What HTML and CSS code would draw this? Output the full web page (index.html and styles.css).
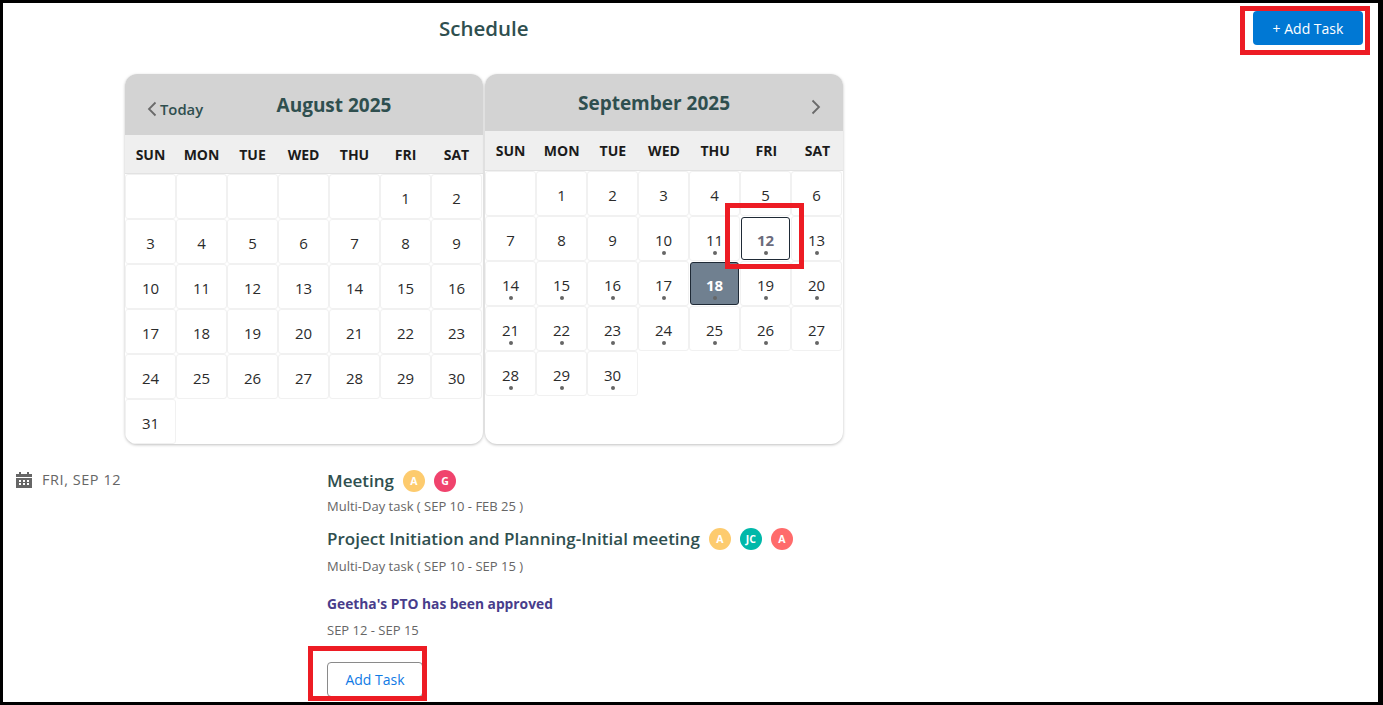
FILE: index.html
```html
<!DOCTYPE html>
<html lang="en">
<head>
    <meta charset="UTF-8">
    <meta name="viewport" content="width=device-width, initial-scale=1.0">
    <title>Schedule</title>
    <link rel="stylesheet" href="styles.css">
</head>
<body>
    <div class="page">
        <header class="top">
            <h1>Schedule</h1>
            <button class="btn-primary">+ Add Task</button>
        </header>

        <div class="calendars">
            <section class="month month-left">
                <div class="month-head">
                    <div class="today">
                        <svg class="chev" viewBox="0 0 10 16"><path d="M8.5 1.5 2 8l6.500 6.500"/></svg>
                        <span>Today</span>
                    </div>
                    <h2>August 2025</h2>
                </div>
                <div class="weekdays">
                    <span>SUN</span><span>MON</span><span>TUE</span><span>WED</span><span>THU</span><span>FRI</span><span>SAT</span>
                </div>
                <div class="days">
                    <div class="day"></div><div class="day"></div><div class="day"></div><div class="day"></div><div class="day"></div>
                    <div class="day">1</div><div class="day">2</div>
                    <div class="day">3</div><div class="day">4</div><div class="day">5</div><div class="day">6</div><div class="day">7</div><div class="day">8</div><div class="day">9</div>
                    <div class="day">10</div><div class="day">11</div><div class="day">12</div><div class="day">13</div><div class="day">14</div><div class="day">15</div><div class="day">16</div>
                    <div class="day">17</div><div class="day">18</div><div class="day">19</div><div class="day">20</div><div class="day">21</div><div class="day">22</div><div class="day">23</div>
                    <div class="day">24</div><div class="day">25</div><div class="day">26</div><div class="day">27</div><div class="day">28</div><div class="day">29</div><div class="day">30</div>
                    <div class="day">31</div>
                </div>
            </section>

            <section class="month month-right">
                <div class="month-head">
                    <h2>September 2025</h2>
                    <svg class="chev chev-next" viewBox="0 0 10 16"><path d="M1.500 1.500 8 8l-6.500 6.500"/></svg>
                </div>
                <div class="weekdays">
                    <span>SUN</span><span>MON</span><span>TUE</span><span>WED</span><span>THU</span><span>FRI</span><span>SAT</span>
                </div>
                <div class="days">
                    <div class="day"></div>
                    <div class="day">1</div><div class="day">2</div><div class="day">3</div><div class="day">4</div><div class="day">5</div><div class="day">6</div>
                    <div class="day">7</div><div class="day">8</div><div class="day">9</div>
                    <div class="day has-task">10</div><div class="day has-task">11</div><div class="day has-task selected">12</div><div class="day has-task">13</div>
                    <div class="day has-task">14</div><div class="day has-task">15</div><div class="day has-task">16</div><div class="day has-task">17</div><div class="day has-task current">18</div><div class="day has-task">19</div><div class="day has-task">20</div>
                    <div class="day has-task">21</div><div class="day has-task">22</div><div class="day has-task">23</div><div class="day has-task">24</div><div class="day has-task">25</div><div class="day has-task">26</div><div class="day has-task">27</div>
                    <div class="day has-task">28</div><div class="day has-task">29</div><div class="day has-task">30</div>
                </div>
            </section>
        </div>

        <div class="agenda">
            <div class="agenda-date">
                <svg class="cal-icon" viewBox="0 0 16 16"><path d="M3 0h2v2h6V0h2v2h3v3H0V2h3zM0 6h16v10H0zm3 2v2h2V8zm4 0v2h2V8zm4 0v2h2V8zm-8 3v2h2v-2zm4 0v2h2v-2zm4 0v2h2v-2z" fill-rule="evenodd"/></svg>
                <span>FRI, SEP 12</span>
            </div>
            <div class="agenda-list">
                <div class="task">
                    <div class="task-title">
                        <span>Meeting</span>
                        <i class="avatar yellow">A</i>
                        <i class="avatar pink">G</i>
                    </div>
                    <p class="task-sub">Multi-Day task ( SEP 10 - FEB 25 )</p>
                </div>
                <div class="task task-second">
                    <div class="task-title">
                        <span>Project Initiation and Planning-Initial meeting</span>
                        <i class="avatar yellow">A</i>
                        <i class="avatar teal">JC</i>
                        <i class="avatar coral">A</i>
                    </div>
                    <p class="task-sub">Multi-Day task ( SEP 10 - SEP 15 )</p>
                </div>
                <div class="pto">Geetha's PTO has been approved</div>
                <p class="task-sub pto-sub">SEP 12 - SEP 15</p>
                <button class="btn-outline">Add Task</button>
            </div>
        </div>
    </div>

    <!-- red review markers drawn over the screenshot -->
    <div class="marker marker-top"></div>
    <div class="marker marker-day"></div>
    <div class="marker marker-bottom"></div>
</body>
</html>
```

FILE: styles.css
```css
* {
    margin: 0;
    padding: 0;
    box-sizing: border-box;
}

html, body {
    height: 705px;
    overflow: hidden;
}

body {
    font-family: 'Open Sans', 'Noto Sans', sans-serif;
    background: #fff;
    color: #2f4f4f;
    border: solid #000;
    border-width: 3px 5px 3px 3px;
    position: relative;
}

.page {
    height: 100%;
    display: flex;
    flex-direction: column;
}

.top {
    height: 71px;
    display: flex;
    justify-content: space-between;
    align-items: flex-start;
    padding: 8px 15px 0 436px;
}

h1 {
    font-size: 20.500px;
    font-weight: 600;
    line-height: 34px;
    color: #2f4f4f;
}

.btn-primary {
    width: 110px;
    height: 34px;
    background: #0078d4;
    color: #fff;
    border: none;
    border-radius: 4px;
    font-family: inherit;
    font-size: 14px;
}

.calendars {
    display: flex;
    gap: 2px;
    margin-left: 122px;
    height: 370px;
}

.month {
    width: 358px;
    height: 370px;
    border-radius: 12px;
    overflow: hidden;
    background: #fff;
    box-shadow: 0 1px 3px rgba(0, 0, 0, 0.25);
}

.month-head {
    position: relative;
    background: #d3d3d3;
    display: flex;
    justify-content: center;
}

.month-left .month-head {
    height: 61px;
    padding: 17px 0 0 60px;
}

.month-right .month-head {
    height: 57px;
    padding: 15px 20px 0 0;
}

h2 {
    font-size: 19px;
    font-weight: 700;
    line-height: 28px;
    color: #2f4f4f;
}

.today {
    position: absolute;
    left: 22px;
    top: 24px;
    display: flex;
    align-items: center;
    gap: 3px;
    font-size: 14.800px;
    font-weight: 600;
    line-height: 22px;
}

.chev {
    width: 10px;
    height: 16px;
    fill: none;
    stroke: #6a6a6a;
    stroke-width: 1.800;
}

.chev-next {
    position: absolute;
    right: 22px;
    top: 25px;
}

.weekdays {
    height: 39px;
    display: grid;
    grid-template-columns: repeat(7, 51px);
    align-items: center;
    background: #efefef;
    border-bottom: 1px solid #e2e2e2;
    text-align: center;
    font-size: 14px;
    font-weight: 700;
    color: #1b1b1b;
}

.month-right .weekdays {
    height: 40px;
    grid-template-columns: repeat(7, 1fr);
}

.days {
    display: grid;
    grid-template-columns: repeat(7, 51px);
    grid-auto-rows: 45px;
}

.day {
    position: relative;
    display: flex;
    align-items: center;
    justify-content: center;
    padding-top: 2px;
    border: 1px solid #f1f1f1;
    border-radius: 3px;
    font-size: 15px;
    color: #2b2b2b;
}

.has-task::after {
    content: "";
    position: absolute;
    left: 50%;
    bottom: 5px;
    width: 4px;
    height: 4px;
    margin-left: -2px;
    border-radius: 50%;
    background: #666;
}

.selected {
    margin: 1px;
    border: 1px solid #1f2a36;
    font-weight: 700;
    color: #6b6b7b;
}

.current {
    margin: 1px;
    background: #708090;
    border: 1px solid #1f2a36;
    font-weight: 700;
    color: #fff;
}

.selected::after,
.current::after {
    bottom: 4px;
}

.agenda {
    display: flex;
    flex: 1;
    padding: 0 0 0 13px;
}

.agenda-date {
    width: 311px;
    padding-top: 26px;
    display: flex;
    align-items: flex-start;
    gap: 10px;
    font-size: 14.500px;
    font-weight: 500;
    line-height: 20px;
    letter-spacing: 0.55px;
    color: #666;
}

.cal-icon {
    width: 16px;
    height: 16px;
    margin-top: 2px;
    fill: #666;
}

.agenda-list {
    padding-top: 25px;
}

.task-title {
    display: flex;
    align-items: center;
    font-size: 17px;
    font-weight: 600;
    line-height: 24px;
    color: #2f4f4f;
}

.avatar {
    width: 22px;
    height: 22px;
    margin-left: 9px;
    border-radius: 50%;
    display: flex;
    align-items: center;
    justify-content: center;
    font-style: normal;
    font-size: 10.500px;
    font-weight: 700;
    color: #fff;
}

.yellow { background: #fdcb6e; }
.pink { background: #f0436d; }
.teal { background: #00b8a9; }
.coral { background: #ff6b6b; }

.task-sub {
    margin-top: 4px;
    font-size: 13px;
    line-height: 18px;
    color: #666;
}

.task-second {
    margin-top: 12px;
}

.task-second .task-sub {
    margin-top: 6px;
}

.pto {
    margin-top: 19px;
    font-size: 13.800px;
    font-weight: 700;
    line-height: 20px;
    color: #483d8b;
}

.task-sub.pto-sub {
    margin-top: 7px;
}

.btn-outline {
    display: block;
    width: 96px;
    height: 35px;
    margin-top: 23px;
    background: #fff;
    border: 1px solid #8a8a8a;
    border-radius: 4px;
    font-family: inherit;
    font-size: 14px;
    color: #0f7ae5;
}

.marker {
    position: absolute;
    border: 5px solid #ed1c24;
}

.marker-top {
    left: 1237px;
    top: 3px;
    width: 130px;
    height: 49px;
}

.marker-day {
    left: 722px;
    top: 200px;
    width: 79px;
    height: 66px;
}

.marker-bottom {
    left: 305px;
    top: 643px;
    width: 119px;
    height: 55px;
}
```
